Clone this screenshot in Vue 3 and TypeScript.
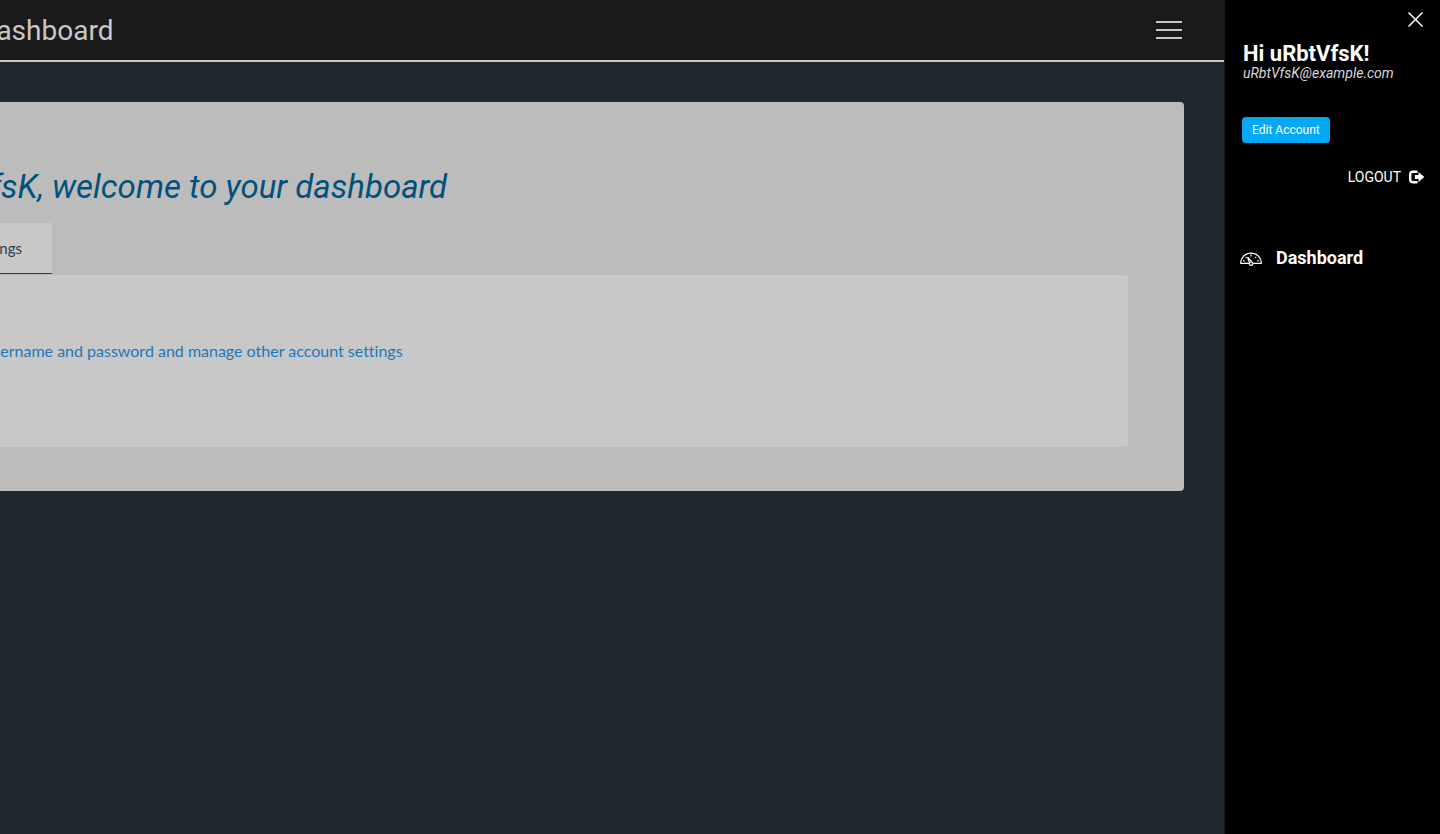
<script setup lang="ts">
import { ref } from 'vue'

interface Account {
  name: string
  email: string
}

const account: Account = { name: 'uRbtVfsK', email: 'uRbtVfsK@example.com' }
const menuOpen = ref(true)
</script>

<template>
  <div class="shell">
    <div class="page">
      <header class="topbar">
        <h1 class="topbar-title">Dashboard</h1>
        <button class="menu-button" type="button" aria-label="Open menu" @click="menuOpen = true">
          <span class="bar"></span>
          <span class="bar"></span>
          <span class="bar"></span>
        </button>
      </header>
      <main class="card">
        <h2 class="welcome">Hi {{ account.name }}, welcome to your dashboard</h2>
        <nav class="tabs">
          <button class="tab" type="button">Account Settings</button>
        </nav>
        <section class="panel">
          <a class="panel-link" href="#account">Change your username and password and manage other account settings</a>
        </section>
      </main>
    </div>

    <aside v-if="menuOpen" class="sidebar">
      <button class="close" type="button" aria-label="Close menu" @click="menuOpen = false">
        <svg width="17" height="16" viewBox="0 0 17 16" fill="none" stroke="#fff" stroke-width="1.5">
          <path d="M.5 .5 14.500 14.500M14.500 .5 .5 14.500" />
        </svg>
      </button>
      <div class="user">
        <strong class="user-name">Hi {{ account.name }}!</strong>
        <em class="user-email">{{ account.email }}</em>
      </div>
      <a class="edit" href="#edit">Edit Account</a>
      <button class="logout" type="button">
        <span>LOGOUT</span>
        <svg width="16" height="14" viewBox="0 0 16 14">
          <path d="M8.500 1.700H4.200Q1.200 1.700 1.200 4.500v5Q1.200 12.300 4.200 12.300H8.500" fill="none" stroke="#fff" stroke-width="2.400" />
          <path d="M6 5h3.500V2l5.800 5-5.800 5V9H6z" fill="#fff" />
        </svg>
      </button>
      <nav class="side-nav">
        <a class="side-link" href="#dashboard">
          <svg width="22" height="15" viewBox="0 0 22 15" fill="none" stroke="#fff" stroke-width="1.200">
            <path d="M9.200 12.400H.700C.700 6.600 5 2.200 11 2.200S21.300 6.600 21.300 12.400H13.200" />
            <path d="M11 3.500v2M3 9.500l1.800.8M19 9.500l-1.800.8M5.800 5.800l1 1M16.200 5.800l-1 1" />
            <path d="M7.600 6.200 9.600 12M7.600 6.200 12 11" />
            <circle cx="11.200" cy="12.700" r="1.700" />
          </svg>
          <span>Dashboard</span>
        </a>
      </nav>
    </aside>
  </div>
</template>

<style>
body {
  margin: 0;
  background: #20272d;
}
</style>

<style scoped>
.shell {
  display: flex;
  justify-content: flex-end;
  min-height: 100vh;
  overflow: hidden;
  background: #20272d;
  font-family: Roboto, "Liberation Sans", sans-serif;
}

.shell * {
  box-sizing: border-box;
}

button {
  padding: 0;
  border: 0;
  background: none;
  color: inherit;
  font-family: inherit;
  cursor: pointer;
}

a {
  text-decoration: none;
}

svg {
  display: block;
}

.page {
  flex: 0 0 100%;
}

.topbar {
  display: flex;
  align-items: center;
  justify-content: space-between;
  height: 62px;
  padding: 0 42px 0 194px;
  border-bottom: 2px solid #c8c8c8;
  background: #1a1a1a;
}

.topbar-title {
  margin: 0;
  color: #c8c8c8;
  font-size: 28px;
  font-weight: 400;
}

.menu-button {
  display: flex;
  flex-direction: column;
  gap: 6px;
  width: 26px;
}

.bar {
  height: 2px;
  background: #c8c8c8;
}

.card {
  margin: 40px;
  padding: 65px 56px 44px;
  border-radius: 4px;
  background: #bcbcbc;
}

.welcome {
  margin: 0 0 16px -15px;
  color: #00527c;
  font-size: 33px;
  font-style: italic;
  font-weight: 400;
  line-height: 40px;
}

.tabs {
  display: flex;
  margin-bottom: 1px;
}

.tab {
  height: 51px;
  padding: 0 30px 0 31px;
  border-bottom: 1px solid #2c3e50;
  background: #c8c8c8;
  color: #2c3e50;
  font-family: Lato, sans-serif;
  font-size: 15px;
}

.panel {
  min-height: 172px;
  padding: 64px 12px;
  border-radius: 3px;
  background: #c8c8c8;
  box-shadow: 0 0 1px #aaa;
}

.panel-link {
  color: #2177b8;
  font-family: Lato, sans-serif;
  font-size: 16px;
  font-variant-ligatures: none;
  line-height: 24px;
}

.sidebar {
  display: flex;
  flex: 0 0 216px;
  flex-direction: column;
  align-items: flex-start;
  padding: 12px 15px;
  border-left: 1px solid #1a1a1a;
  background: #000;
  color: #fff;
}

.close {
  align-self: flex-end;
}

.user {
  display: flex;
  flex-direction: column;
  margin: 15px 0 36px 3px;
}

.user-name {
  font-size: 22px;
  line-height: 22px;
}

.user-email {
  color: #d8d8d8;
  font-size: 14px;
  line-height: 16px;
}

.edit {
  margin-left: 2px;
  padding: 0 10px;
  border-radius: 4px;
  background: #03a9f4;
  color: #fff;
  font-size: 12px;
  line-height: 26px;
}

.logout {
  display: flex;
  align-items: center;
  align-self: flex-end;
  gap: 8px;
  margin-top: 26px;
  font-size: 14px;
}

.side-nav {
  margin-top: 61px;
}

.side-link {
  display: flex;
  align-items: center;
  gap: 14px;
  color: #fff;
  font-size: 18px;
  font-weight: 700;
  line-height: 24px;
}
</style>
